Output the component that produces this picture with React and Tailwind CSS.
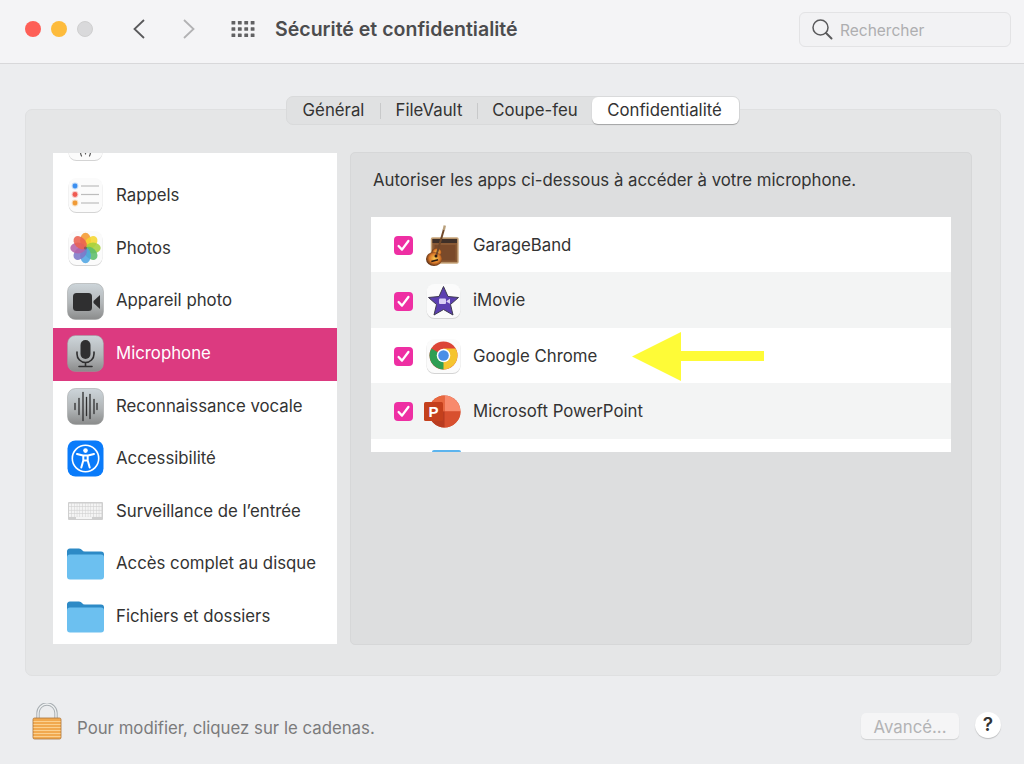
import React from "react";

const Tile = ({ children }) => (
  <svg width="37" height="37" viewBox="0 0 37 37" className="block">
    <defs>
      <linearGradient id="grayTile" x1="0" y1="0" x2="0" y2="1">
        <stop offset="0" stopColor="#cdd5da" />
        <stop offset="0.55" stopColor="#b2b6b8" />
        <stop offset="1" stopColor="#8a8b8b" />
      </linearGradient>
    </defs>
    <rect x="0.5" y="0.5" width="36" height="36" rx="8" fill="url(#grayTile)" stroke="#9a9c9d" strokeWidth="0.5" />
    {children}
  </svg>
);

const WhiteTile = ({ children }) => (
  <svg width="37" height="37" viewBox="0 0 37 37" className="block">
    <rect x="1.5" y="2" width="34" height="34" rx="8" fill="#d4d4d4" />
    <rect x="1.5" y="1" width="34" height="34" rx="8" fill="#fbfbfb" />
    {children}
  </svg>
);

const RemindersIcon = () => (
  <WhiteTile>
    {[[9, "#3b8ff0"], [17.5, "#ef5b52"], [26, "#f09a35"]].map(([y, c]) => (
      <g key={y}>
        <circle cx="8" cy={y} r="3.4" fill={c} fillOpacity="0.3" />
        <circle cx="8" cy={y} r="2.4" fill={c} />
        <rect x="14" y={y - 0.6} width="18" height="1.2" fill="#bdbdbd" />
      </g>
    ))}
  </WhiteTile>
);

const PhotosIcon = () => {
  const petals = ["#f59a2f", "#f5d62f", "#a4d03c", "#5dbd6a", "#4fa5e3", "#7d78c8", "#b562a8", "#ea6250"];
  return (
    <WhiteTile>
      {petals.map((c, i) => (
        <ellipse key={c} cx="18.5" cy="10.5" rx="5.4" ry="7.7" fill={c} fillOpacity="0.88" transform={`rotate(${i * 45} 18.5 18)`} />
      ))}
      <circle cx="18.5" cy="18" r="1.6" fill="#5f4a4a" fillOpacity="0.55" />
    </WhiteTile>
  );
};

const CameraIcon = () => (
  <Tile>
    <rect x="6" y="10" width="19" height="18" rx="3.5" fill="#2f2f30" />
    <path d="M26.5 18 L33 12 V26 L26.5 20 Z" fill="#2f2f30" />
  </Tile>
);

const MicIcon = () => (
  <Tile>
    <rect x="13.5" y="5" width="10" height="19" rx="5" fill="#2f2f30" />
    <path d="M10 17 V19 A8.5 8.5 0 0 0 27 19 V17 M18.5 27.5 V31 M12 31.5 H25" fill="none" stroke="#2f2f30" strokeWidth="1.6" strokeLinecap="round" />
  </Tile>
);

const WaveIcon = () => (
  <Tile>
    {[[8, 3], [12, 8], [16, 14], [19.5, 9], [23, 12], [27, 7], [30, 3]].map(([x, h]) => (
      <line key={x} x1={x} x2={x} y1={18.5 - h} y2={18.5 + h} stroke="#2f2f30" strokeWidth="1.3" strokeLinecap="round" />
    ))}
  </Tile>
);

const AccessIcon = () => (
  <svg width="37" height="37" viewBox="0 0 37 37" className="block">
    <rect x="0.5" y="0.5" width="36" height="36" rx="8" fill="#0a7bfa" />
    <circle cx="18.5" cy="18.5" r="13.2" fill="none" stroke="#fff" strokeWidth="1.6" />
    <circle cx="18.5" cy="10.6" r="2.3" fill="#fff" />
    <path d="M10 14 L16 15.5 H21 L27 14 M16.3 15.5 V20.5 L14.3 27.5 M20.7 15.5 V20.5 L22.7 27.5 M16.3 20.5 H20.7" fill="none" stroke="#fff" strokeWidth="2" strokeLinecap="round" strokeLinejoin="round" />
  </svg>
);

const KeyboardIcon = () => (
  <svg width="37" height="20" viewBox="0 0 37 20" className="block">
    <rect x="1" y="1" width="35" height="18" rx="1" fill="#cfcfcf" />
    {[2.5, 6, 9.5, 13].map((y) =>
      Array.from({ length: 12 }).map((_, i) => (
        <rect key={`${y}-${i}`} x={2 + i * 2.75} y={y} width="2.3" height="2.9" fill="#f4f4f4" />
      ))
    )}
    <rect x="9" y="16" width="16" height="2" fill="#f4f4f4" />
  </svg>
);

const FolderIcon = () => (
  <svg width="37" height="32" viewBox="0 0 37 32" className="block">
    <path d="M0 4 A3 3 0 0 1 3 0.5 H12 Q14 0.5 15 2 Q16 3.5 18 3.5 H34 A3 3 0 0 1 37 6.5 V14 H0 Z" fill="#2d8ac6" />
    <rect x="0" y="6.5" width="37" height="25" rx="3" fill="#6cc0f0" />
  </svg>
);

const PartialIcon = () => (
  <WhiteTile>
    <path d="M13.5 24 Q13 28 14.5 31 M23.5 24 Q24 28 22.5 31 M18.5 26 V29" fill="none" stroke="#5a5a5a" strokeWidth="1.2" strokeLinecap="round" />
  </WhiteTile>
);

const GarageBandIcon = () => (
  <svg width="36" height="42" viewBox="0 0 36 42" className="block">
    <defs>
      <radialGradient id="burst" cx="0.55" cy="0.45" r="0.6">
        <stop offset="0" stopColor="#f8c94f" />
        <stop offset="0.55" stopColor="#dc7a2a" />
        <stop offset="1" stopColor="#3d1d10" />
      </radialGradient>
    </defs>
    <rect x="6.5" y="13" width="26.5" height="25" rx="1" fill="#8a5a35" stroke="#c8a67c" strokeWidth="1.4" />
    <rect x="7.5" y="14" width="24.5" height="4" fill="#3f3028" />
    <rect x="9.5" y="20" width="21" height="15.5" fill="#7a4a2a" />
    <ellipse cx="11.5" cy="27.5" rx="5" ry="4.2" fill="url(#burst)" />
    <ellipse cx="9" cy="34" rx="8" ry="7" fill="url(#burst)" />
    <circle cx="11" cy="31" r="1.5" fill="#2b1a12" />
    <rect x="6" y="35" width="7" height="1.6" fill="#2b1a12" transform="rotate(-15 9 35)" />
    <line x1="19" y1="4" x2="11.5" y2="30" stroke="#70482a" strokeWidth="2" />
    <line x1="19.8" y1="0.5" x2="18.8" y2="5" stroke="#b9a07c" strokeWidth="2.4" />
  </svg>
);

const IMovieIcon = () => (
  <WhiteTile>
    <path d="M18.5 3.5 L23 13.5 L33.5 14.5 L25.5 21.5 L28 32 L18.5 26.5 L9 32 L11.5 21.5 L3.5 14.5 L14 13.5 Z" fill="#5b3fb0" stroke="#3e3a4e" strokeWidth="1" strokeLinejoin="round" />
    <rect x="14" y="15.5" width="7" height="5.5" rx="1" fill="#d9cff5" />
    <path d="M21.5 18 L25 15.8 V20.7 L21.5 18.8 Z" fill="#d9cff5" />
  </WhiteTile>
);

const ChromeIcon = () => (
  <WhiteTile>
    <circle cx="18.5" cy="17.5" r="14" fill="#dc4537" />
    <path d="M18.5 17.5 L6.4 10.5 A14 14 0 0 0 18.5 31.5 L25.5 19.5 Z" fill="#2f9e54" />
    <path d="M18.5 17.5 L18.5 31.5 A14 14 0 0 0 30.6 10.5 L18.5 10.5 Z" fill="#f5c42f" />
    <circle cx="18.5" cy="17.5" r="6.8" fill="#fff" />
    <circle cx="18.5" cy="17.5" r="5.3" fill="#4a8fe6" />
  </WhiteTile>
);

const PowerPointIcon = () => (
  <svg width="38" height="34" viewBox="0 0 38 34" className="block">
    <circle cx="20.5" cy="16.5" r="16" fill="#d2492a" />
    <path d="M20.5 0.5 A16 16 0 0 1 36.5 16.5 H20.5 Z" fill="#f88a6c" />
    <path d="M20.5 0.5 A16 16 0 0 0 4.5 16.5 H20.5 Z" fill="#e8683f" />
    <path d="M36.5 16.5 A16 16 0 0 1 20.5 32.5 V16.5 Z" fill="#d8502f" />
    <path d="M20.5 32.5 A16 16 0 0 1 4.5 16.5 H20.5 Z" fill="#b93c20" />
    <rect x="0" y="7" width="19" height="19" rx="1.5" fill="#c4401c" />
    <text x="9.5" y="22" textAnchor="middle" fontFamily="Liberation Sans, sans-serif" fontWeight="700" fontSize="15" fill="#fff">P</text>
  </svg>
);

const LockIcon = () => (
  <svg width="30" height="37" viewBox="0 0 30 37" className="block">
    <path d="M6 16 V10 A9 9 0 0 1 24 10 V16" fill="none" stroke="#a9afb3" strokeWidth="3.4" />
    <path d="M6 16 V10 A9 9 0 0 1 24 10 V16" fill="none" stroke="#eef0f1" strokeWidth="1.4" />
    <rect x="1" y="15" width="28" height="21" rx="1.5" fill="#f1a94f" stroke="#a9733c" strokeWidth="0.8" />
    {[18, 21, 24, 27, 30, 33].map((y) => (
      <rect key={y} x="1.5" y={y} width="27" height="1" fill="#fbd08f" />
    ))}
  </svg>
);

const sidebar = [
  { icon: <RemindersIcon />, label: "Rappels" },
  { icon: <PhotosIcon />, label: "Photos" },
  { icon: <CameraIcon />, label: "Appareil photo" },
  { icon: <MicIcon />, label: "Microphone", active: true },
  { icon: <WaveIcon />, label: "Reconnaissance vocale" },
  { icon: <AccessIcon />, label: "Accessibilité" },
  { icon: <KeyboardIcon />, label: "Surveillance de l’entrée" },
  { icon: <FolderIcon />, label: "Accès complet au disque" },
  { icon: <FolderIcon />, label: "Fichiers et dossiers" },
];

const apps = [
  { icon: <GarageBandIcon />, label: "GarageBand" },
  { icon: <IMovieIcon />, label: "iMovie", alt: true },
  { icon: <ChromeIcon />, label: "Google Chrome" },
  { icon: <PowerPointIcon />, label: "Microsoft PowerPoint", alt: true },
];

const Check = () => (
  <span className="flex h-[19px] w-[19px] shrink-0 items-center justify-center rounded-[4px] bg-[#ee2fa3]">
    <svg width="15" height="15" viewBox="0 0 15 15">
      <path d="M2.6 8 L6 11.6 L12.4 3" fill="none" stroke="#fff" strokeWidth="2.3" strokeLinecap="round" strokeLinejoin="round" />
    </svg>
  </span>
);

const Sep = () => <span className="h-[16px] w-px bg-[#c8c9ca]" />;

export default function App() {
  return (
    <div
      className="flex h-[764px] w-[1024px] flex-col overflow-hidden bg-[#ecedef] text-[#2d2d2d]"
      style={{ fontFamily: 'Inter, "Noto Sans", sans-serif' }}
    >
      <header className="flex h-[64px] shrink-0 items-center border-b border-[#d8d8da] bg-[#f4f4f6] pb-[5px] pl-[25px] pr-[13px]">
        <div className="flex gap-[10px]">
          <span className="h-[16px] w-[16px] rounded-full bg-[#fe5f57]" />
          <span className="h-[16px] w-[16px] rounded-full bg-[#fdbb3c]" />
          <span className="h-[16px] w-[16px] rounded-full border border-[#cfcfd0] bg-[#d9d9db]" />
        </div>
        <svg width="14" height="22" viewBox="0 0 14 22" className="ml-[38.5px]">
          <path d="M12 2 L2.5 11 L12 20" fill="none" stroke="#59595b" strokeWidth="1.8" />
        </svg>
        <svg width="14" height="22" viewBox="0 0 14 22" className="ml-[36px]">
          <path d="M2 2 L11.5 11 L2 20" fill="none" stroke="#b2b2b4" strokeWidth="1.8" />
        </svg>
        <svg width="24" height="18" viewBox="0 0 24 18" className="ml-[35.5px]">
          {[0, 1, 2].map((r) =>
            [0, 1, 2, 3].map((c) => (
              <rect key={`${r}${c}`} x={0.5 + c * 6.4} y={1 + r * 6.2} width="3.8" height="3.6" rx="0.5" fill="#616163" />
            ))
          )}
        </svg>
        <h1 className="ml-[20px] pt-[2px] text-[19.55px] font-semibold text-[#4c4c4e]">Sécurité et confidentialité</h1>
        <div className="ml-auto flex h-[35px] w-[212px] items-center rounded-[6px] border border-[#e3e3e5] bg-[#f2f2f4] pl-[11px]">
          <svg width="22" height="22" viewBox="0 0 22 22">
            <circle cx="9.5" cy="9.5" r="7.5" fill="none" stroke="#5a5a5c" strokeWidth="1.5" />
            <path d="M15 15 L20.5 20.5" stroke="#5a5a5c" strokeWidth="2" strokeLinecap="round" />
          </svg>
          <span className="ml-[7px] pt-[3px] text-[15.5px] text-[#aeaeb0]">Rechercher</span>
        </div>
      </header>

      <main className="flex flex-1 flex-col pl-[25px] pr-[23px]">
        <div className="relative z-10 ml-[261px] mt-[32px] -mb-[16px] flex h-[29px] w-[454px] items-center rounded-[7px] border border-[#d9dadb] bg-[#e0e1e2] text-[16.8px] text-[#333]">
          <span className="w-[93px] text-center">Général</span>
          <Sep />
          <span className="w-[96px] text-center">FileVault</span>
          <Sep />
          <span className="w-[114px] text-center">Coupe-feu</span>
          <span className="ml-auto flex h-[27px] w-[147px] items-center justify-center rounded-[6px] bg-white pr-[2px] shadow-[0_1px_1px_rgba(0,0,0,0.25)]">Confidentialité</span>
        </div>

        <section className="flex h-[567px] gap-[13px] rounded-[7px] border border-[#dfe0e1] bg-[#e5e6e7] pl-[27px] pr-[28px] pt-[43px]">
          <nav className="h-[491px] w-[284px] shrink-0 overflow-hidden bg-white text-[16.8px] text-[#333]">
            <div className="-mt-[35px] flex h-[52.6px] items-center pb-[2px] pl-[14px]">
              <span className="flex w-[37px] justify-center"><PartialIcon /></span>
            </div>
            {sidebar.map((s) => (
              <div key={s.label} className={`flex h-[52.6px] items-center gap-[12px] pb-[2px] pl-[14px] ${s.active ? "bg-[#dc3a80] text-white" : ""}`}>
                <span className="flex w-[37px] shrink-0 justify-center">{s.icon}</span>
                <span>{s.label}</span>
              </div>
            ))}
          </nav>

          <div className="-mt-px h-[493px] flex-1 rounded-[5px] border border-[#d6d7d8] bg-[#dddedf] px-[20px]">
            <p className="mt-[16px] pl-[2px] text-[16.8px] leading-[22px] text-[#333]">Autoriser les apps ci-dessous à accéder à votre microphone.</p>
            <div className="relative mt-[26px] h-[235px] overflow-hidden bg-white text-[16.8px] text-[#333]">
              {apps.map((a) => (
                <div key={a.label} className={`flex h-[55.4px] items-center pl-[23px] pt-[2px] ${a.alt ? "bg-[#f3f4f4]" : ""}`}>
                  <Check />
                  <span className="ml-[11px] flex w-[38px] shrink-0 justify-center">{a.icon}</span>
                  <span className="ml-[11px]">{a.label}</span>
                </div>
              ))}
              <div className="ml-[61px] mt-[11px] h-[6px] w-[29px] rounded-t-[2px] bg-[#5cb4ee]" />
            </div>
          </div>
        </section>

        <footer className="flex flex-1 items-start">
          <span className="ml-[7px] mt-[27px]"><LockIcon /></span>
          <span className="ml-[15px] mt-[40px] text-[16.8px] leading-[24px] text-[#7b7b7c]">Pour modifier, cliquez sur le cadenas.</span>
          <span className="ml-auto mt-[37px] flex h-[26px] w-[98px] items-center justify-center rounded-[5px] bg-[#f5f5f6] pt-[3px] text-[16.8px] text-[#b3b3b5] shadow-[0_1px_1px_rgba(0,0,0,0.12)]">Avancé...</span>
          <span className="ml-[16px] mt-[36px] flex h-[26px] w-[26px] items-center justify-center rounded-full bg-white text-[19px] font-semibold text-[#333] shadow-[0_1px_1px_rgba(0,0,0,0.2)]">?</span>
        </footer>
      </main>

      <svg width="132" height="49" viewBox="0 0 132 49" className="absolute left-[632px] top-[332px]">
        <path d="M0 24.5 L49 0 V19 H132 V29 H49 V49 Z" fill="#fefb37" />
      </svg>
    </div>
  );
}
